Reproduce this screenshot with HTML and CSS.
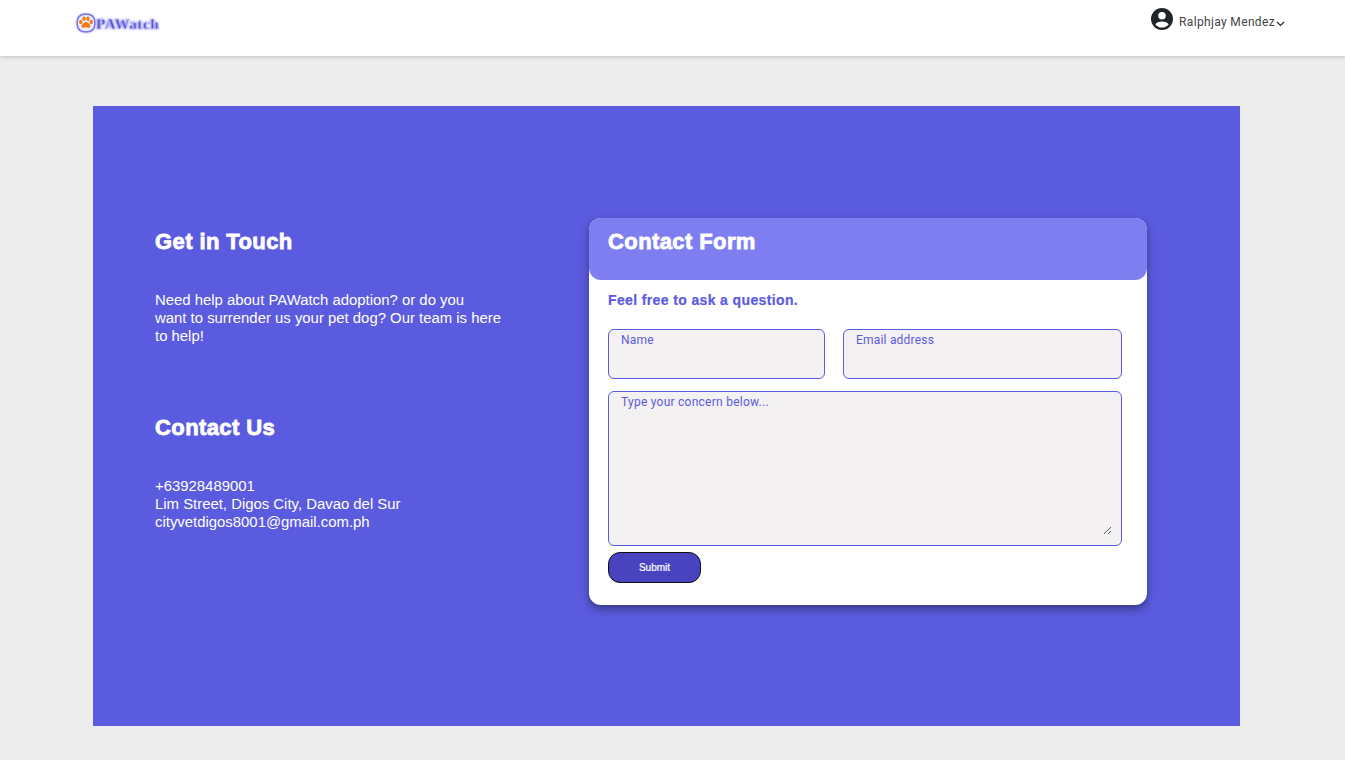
FILE: index.html
```html
<!DOCTYPE html>
<html lang="en">
<head>
    <meta charset="UTF-8">
    <meta name="viewport" content="width=device-width, initial-scale=1.0">
    <title>Contact Us</title>
    <link rel="stylesheet" href="styles.css">
</head>
<body>

    <nav class="navbar">
        <div class="brand">
            <svg class="brand-paw" width="20" height="20" viewBox="0 0 20 20">
                <rect x="0.500" y="0.500" width="19" height="19" rx="8" fill="#7a76ee"/>
                <rect x="2" y="2" width="16" height="16" rx="6.500" fill="#eeedff"/>
                <ellipse cx="4.800" cy="9" rx="1.700" ry="2.200" fill="#f47c1c"/>
                <ellipse cx="8" cy="5.800" rx="1.700" ry="2.200" fill="#f47c1c"/>
                <ellipse cx="12" cy="5.800" rx="1.700" ry="2.200" fill="#f47c1c"/>
                <ellipse cx="15.200" cy="9" rx="1.700" ry="2.200" fill="#f47c1c"/>
                <path d="M10 9c2.200 0 4.500 2.500 4.500 4.200s-1.700 1.600-2.300 1.600-1.400-.5-2.200-.5-1.600.5-2.200.5-2.300.1-2.300-1.600S7.800 9 10 9z" fill="#f47c1c"/>
            </svg>
            <span class="brand-name">PAWatch</span>
        </div>
        <div class="user-menu">
            <svg class="user-icon" width="24" height="24" viewBox="0 0 24 24">
                <path fill="#212529" d="M12 1a11 11 0 1 0 0 22 11 11 0 0 0 0-22zm0 4a3.800 3.800 0 1 1 0 7.600A3.800 3.800 0 0 1 12 5zm0 15.600a8.700 8.700 0 0 1-6.700-3.100c.9-1.700 3.800-2.900 6.700-2.900s5.800 1.200 6.700 2.900a8.700 8.700 0 0 1-6.700 3.100z"/>
            </svg>
            <span class="user-name">Ralphjay Mendez</span>
            <svg class="user-caret" width="9" height="6" viewBox="0 0 9 6">
                <path d="M1 1l3.500 3.500L8 1" fill="none" stroke="#212529" stroke-width="1.200"/>
            </svg>
        </div>
    </nav>

    <main class="contact-panel">
        <section class="contact-info">
            <h2>Get in Touch</h2>
            <p class="help-text">Need help about PAWatch adoption? or do you<br>want to surrender us your pet dog? Our team is here<br>to help!</p>
            <h2>Contact Us</h2>
            <p class="details">+63928489001<br>Lim Street, Digos City, Davao del Sur<br>cityvetdigos8001@gmail.com.ph</p>
        </section>

        <section class="contact-card">
            <div class="card-header">
                <h2>Contact Form</h2>
            </div>
            <form class="card-body">
                <h3>Feel free to ask a question.</h3>
                <div class="form-row">
                    <input class="field field-name" type="text" placeholder="Name">
                    <input class="field field-email" type="email" placeholder="Email address">
                </div>
                <div class="message-box">
                    <textarea class="field-message" placeholder="Type your concern below..."></textarea>
                </div>
                <button class="submit-btn" type="button">Submit</button>
            </form>
        </section>
    </main>

</body>
</html>
```

FILE: styles.css
```css
* {
    box-sizing: border-box;
}
body {
    margin: 0;
    height: 760px;
    overflow: hidden;
    background-color: #ededed;
    font-family: "Liberation Sans", Arial, sans-serif;
}
.navbar {
    display: flex;
    justify-content: space-between;
    height: 56px;
    padding: 12px 60px 0 76px;
    background-color: #fff;
    box-shadow: 0 1px 4px rgba(0, 0, 0, 0.2);
}
.brand {
    display: flex;
    align-items: center;
    height: 21px;
}
.brand-paw {
    filter: drop-shadow(0 0 1px #a9a6f8);
}
.brand-name {
    margin-top: 4px;
    font-family: "Liberation Serif", serif;
    font-size: 15px;
    font-weight: bold;
    letter-spacing: 0.6px;
    color: #4f4bd6;
    -webkit-text-stroke: 0.3px #fff;
    text-shadow: 0 0 1px #7a76ee, 0 0 2px #7a76ee, 0 0 3px #a9a6f8;
}
.user-menu {
    display: flex;
    align-items: flex-start;
    margin-top: -5px;
}
.user-icon {
    margin-right: 5px;
    margin-left: -1px;
}
.user-name {
    margin-top: 8px;
    font-family: Roboto, sans-serif;
    font-size: 12px;
    letter-spacing: 0.35px;
    color: #444;
}
.user-caret {
    margin-top: 14px;
    margin-left: 1px;
}
.contact-panel {
    display: flex;
    width: 1147px;
    height: 620px;
    margin: 50px 0 0 93px;
    padding: 112px 93px 0 62px;
    background-color: #5b5bdf;
    color: #fff;
}
.contact-info {
    width: 372px;
    margin-right: 62px;
    padding-top: 11px;
}
.contact-info h2 {
    margin: 0;
    font-size: 22px;
    line-height: 26px;
    letter-spacing: 0.4px;
    -webkit-text-stroke: 0.8px #fff;
}
.help-text {
    margin: 36px 0 70px;
    font-size: 14.9px;
    line-height: 18px;
}
.details {
    margin: 36px 0 0;
    font-size: 14.9px;
    line-height: 18px;
}
.contact-card {
    width: 558px;
    height: 387px;
    border-radius: 12px;
    background-color: #fff;
    box-shadow: 0 4px 8px rgba(0, 0, 0, 0.4);
}
.card-header {
    height: 62px;
    padding: 11px 19px 0;
    border-radius: 12px;
    background-color: #7e7ef0;
}
.card-header h2 {
    margin: 0;
    font-size: 22px;
    line-height: 26px;
    letter-spacing: 0.4px;
    -webkit-text-stroke: 0.8px #fff;
}
.card-body {
    padding: 11px 25px 0 19px;
}
.card-body h3 {
    margin: 0 0 20px;
    font-size: 14px;
    line-height: 18px;
    letter-spacing: 0.37px;
    color: #5b5bdf;
    -webkit-text-stroke: 0.2px #5b5bdf;
}
.form-row {
    display: flex;
    gap: 18px;
    margin-bottom: 12px;
}
.field,
.message-box {
    border: 1px solid #5b5bdf;
    border-radius: 6px;
    background-color: #f3f1f2;
}
.field {
    display: block;
    height: 50px;
    padding: 0 12px 29px;
    font-family: Roboto, sans-serif;
    font-size: 12px;
    letter-spacing: 0.2px;
    outline: none;
}
.field::placeholder,
.field-message::placeholder {
    color: #5b5bdf;
    opacity: 1;
}
.field-name {
    width: 217px;
}
.field-email {
    width: 279px;
}
.message-box {
    width: 514px;
    height: 155px;
    margin-bottom: 6px;
    padding: 0 9px 10px 0;
}
.field-message {
    display: block;
    width: 100%;
    height: 100%;
    padding: 3px 12px 0;
    border: none;
    background: transparent;
    font-family: Roboto, sans-serif;
    font-size: 12px;
    letter-spacing: 0.25px;
    outline: none;
}
.submit-btn {
    display: block;
    width: 93px;
    height: 31px;
    padding: 0;
    border: 1px solid #111;
    border-radius: 12px;
    background-color: #4a43c0;
    color: #fff;
    font-family: "Liberation Sans", Arial, sans-serif;
    font-size: 10px;
    -webkit-text-stroke: 0.2px #fff;
}
```
